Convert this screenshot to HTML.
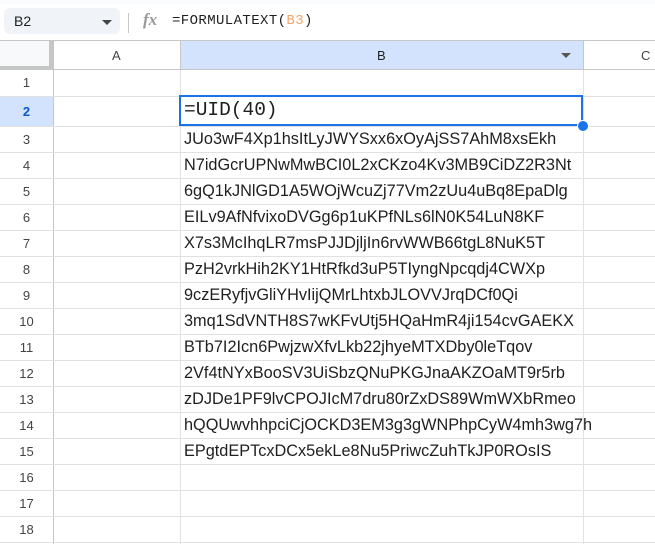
<!DOCTYPE html>
<html><head><style>
body{margin:0;width:655px;height:544px;overflow:hidden;background:#fff;font-family:"Liberation Sans",sans-serif;position:relative}
.a{position:absolute}
.hl{position:absolute;height:1px;background:#e1e1e1}
.vl{position:absolute;width:1px;background:#e1e1e1}
.rn{position:absolute;left:0;width:53px;text-align:center;font-size:13px;color:#444}
.t{position:absolute;left:184px;font-size:16.3px;color:#1f1f1f;white-space:nowrap}
</style></head><body>
<div class="a" style="left:0;top:0;width:655px;height:4px;background:#f9fbfd"></div>
<div class="a" style="left:4px;top:8px;width:116px;height:26px;background:#f0f4f9;border-radius:6px"></div>
<div class="a" style="left:14px;top:13px;font-size:14px;color:#1f1f1f">B2</div>
<div class="a" style="left:102px;top:20px;width:0;height:0;border-left:5px solid transparent;border-right:5px solid transparent;border-top:5px solid #444"></div>
<div class="a" style="left:128px;top:13px;width:1px;height:20px;background:#c7c7c7"></div>
<div class="a" style="left:143px;top:10px;font-size:17px;font-style:italic;font-family:'Liberation Serif',serif;color:#999;font-weight:bold">fx</div>
<div class="a" style="left:172px;top:13px;font-size:14px;color:#1f1f1f;font-family:'Liberation Mono',monospace;letter-spacing:0.4px">=FORMULATEXT(<span style="color:#f4a46a">B3</span>)</div>
<div class="a" style="left:0;top:40px;width:655px;height:1px;background:#c4c7c5"></div>
<div class="a" style="left:0;top:41px;width:53px;height:29px;background:#f8f9fa"></div>
<div class="a" style="left:180px;top:41px;width:403px;height:29px;background:#d3e3fd"></div>
<div class="a" style="left:0;top:69px;width:655px;height:1px;background:#c4c7c5"></div>
<div class="a" style="left:53px;top:40px;width:1px;height:504px;background:#c4c7c5"></div>
<div class="a" style="left:0;top:66px;width:53px;height:4px;background:#c4c7c5"></div>
<div class="a" style="left:49px;top:40px;width:4px;height:30px;background:#c4c7c5"></div>
<div class="a" style="left:112px;top:48px;font-size:13px;color:#444">A</div>
<div class="a" style="left:377px;top:48px;font-size:13px;color:#1f1f1f">B</div>
<div class="a" style="left:641px;top:48px;font-size:13px;color:#444">C</div>
<div class="a" style="left:561px;top:53px;width:0;height:0;border-left:5px solid transparent;border-right:5px solid transparent;border-top:5px solid #555"></div>
<div class="vl" style="left:180px;top:40px;height:504px"></div>
<div class="vl" style="left:583px;top:40px;height:504px"></div>
<div class="a" style="left:180px;top:40px;width:1px;height:30px;background:#c4c7c5"></div>
<div class="a" style="left:583px;top:40px;width:1px;height:30px;background:#c4c7c5"></div>
<div class="a" style="left:0;top:97px;width:53px;height:29px;background:#d3e3fd"></div>
<div id="g"></div>
<div class="rn" style="top:75px">1</div>
<div class="rn" style="top:104px;font-weight:bold;color:#0b57d0">2</div>
<div class="a" style="left:184px;top:99px;font-size:19.5px;font-family:'Liberation Mono',monospace;color:#1f1f1f">=UID(40)</div>
<div class="a" style="left:179px;top:95px;width:400px;height:27px;border:2px solid #1a73e8"></div>
<div class="a" style="left:577px;top:120px;width:10px;height:10px;border-radius:50%;background:#1a73e8;border:1px solid #fff"></div>
<script>
var d=["JUo3wF4Xp1hsItLyJWYSxx6xOyAjSS7AhM8xsEkh","N7idGcrUPNwMwBCI0L2xCKzo4Kv3MB9CiDZ2R3Nt","6gQ1kJNlGD1A5WOjWcuZj77Vm2zUu4uBq8EpaDlg","EILv9AfNfvixoDVGg6p1uKPfNLs6lN0K54LuN8KF","X7s3McIhqLR7msPJJDjljIn6rvWWB66tgL8NuK5T","PzH2vrkHih2KY1HtRfkd3uP5TIyngNpcqdj4CWXp","9czERyfjvGliYHvIijQMrLhtxbJLOVVJrqDCf0Qi","3mq1SdVNTH8S7wKFvUtj5HQaHmR4ji154cvGAEKX","BTb7I2Icn6PwjzwXfvLkb22jhyeMTXDby0leTqov","2Vf4tNYxBooSV3UiSbzQNuPKGJnaAKZOaMT9r5rb","zDJDe1PF9lvCPOJIcM7dru80rZxDS89WmWXbRmeo","hQQUwvhhpciCjOCKD3EM3g3gWNPhpCyW4mh3wg7h","EPgtdEPTcxDCx5ekLe8Nu5PriwcZuhTkJP0ROsIS"];
var h='';
h+='<div class="hl" style="left:0;top:96px;width:655px"></div>';
for(var r=3;r<=19;r++){var y=126+(r-3)*26;h+='<div class="hl" style="left:0;top:'+y+'px;width:655px"></div>';
if(r<=18)h+='<div class="rn" style="top:'+(y+6)+'px">'+r+'</div>';
if(r<=15)h+='<div class="t" style="top:'+(y+4)+'px">'+d[r-3]+'</div>';}
document.getElementById('g').innerHTML=h;
</script>
</body></html>
